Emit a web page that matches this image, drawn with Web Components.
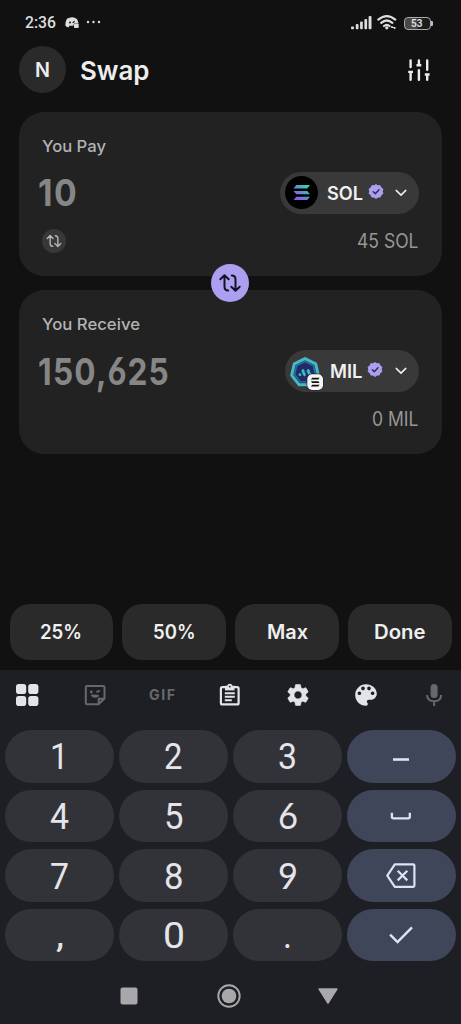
<!DOCTYPE html>
<html lang="en">
<head>
<meta charset="utf-8">
<meta name="viewport" content="width=device-width">
<title>Swap</title>
<style>
html,body{margin:0;height:100%;background:#111;}
</style>
</head>
<body>
<swap-screen></swap-screen>
<script>
const ICONS = {
  discord: ['0 0 14 12', '<path fill="currentColor" d="M4.200 1 5.200.4Q7 0 8.900.4l1 .6q2 .4 2.700 2.200l.9 3.200H9.600q-1 0-1 1v1.300H4.500L3.400 10.600Q1.300 10 .3 8.600.1 4.800 1.800 1.900q.8-.8 2.400-.9Z"/><circle cx="5" cy="5.600" r="1" fill="#111"/><path d="M7.700 5.800 9.600 4.300" stroke="#111" stroke-width="1.200"/><rect x="9" y="6.800" width="4.700" height="4.200" rx=".8" fill="currentColor"/>'],
  dots: ['0 0 16 4', '<g fill="currentColor"><circle cx="2" cy="2" r="1.200"/><circle cx="7.500" cy="2" r="1.200"/><circle cx="13" cy="2" r="1.200"/></g>'],
  signal: ['0 0 21 14', '<g fill="currentColor"><rect x="0" y="10.500" width="3" height="2.800" rx="1"/><rect x="4.800" y="8" width="2.700" height="5.300" rx="1"/><rect x="9.100" y="5.500" width="2.700" height="7.800" rx="1"/><rect x="13.400" y="3" width="2.700" height="10.300" rx="1"/><rect x="17.600" y="0" width="2.900" height="13.300" rx="1"/></g>'],
  wifi: ['0 0 20 15', '<g fill="none" stroke="currentColor" stroke-width="2.200" stroke-linecap="round"><path d="M1.300 4.600Q9.800-2.500 18.300 4.600M4.200 7.900Q9.800 3.100 15.400 7.900M7 11Q9.800 8.600 12.600 11"/></g><circle cx="9.800" cy="12.800" r="1.600" fill="currentColor"/><path d="M14 12.500h4.500m-3-1.200-1.500 1.200m4.500 0-1.500 1.300" stroke="currentColor" stroke-width="1.200"/>'],
  sliders: ['0 0 22 22', '<g fill="none" stroke="currentColor" stroke-width="2.400"><g stroke-linecap="round"><path d="M2.600 1.500v6.600M2.600 14v6.700M10.900 1.500v4M10.900 11.200v9.500M19.200 1.500v9.300M19.200 16v4.700"/></g><path d="M.2 12.900h4.800M8.500 6.300h4.800M16.800 15.500h4.800"/></g>'],
  swap: ['0 0 22 20', '<g fill="none" stroke="currentColor" stroke-width="2" stroke-linecap="round" stroke-linejoin="round"><path d="M1.300 6.300 5.500 2.200 9.700 6.300M5.500 2.500v11q0 4 3.700 4M12.800 2.500q3.700 0 3.700 4v11M12.300 13.700l4.200 4.100 4.200-4.100"/></g>'],
  seal: ['0 0 16 16', '<path fill="#ab9ff2" d="m8 .6 1.900 1.200 2.300-.1.800 2.100 1.900 1.300L14.300 7.300l.6 2.300L13 10.900l-.8 2.100-2.300.1L8 14.500l-1.900-1.400-2.300-.1L3 10.900 1.100 9.600 1.700 7.300 1.100 5.100 3 3.800l.8-2.100 2.300.1Z" stroke="#ab9ff2" stroke-linejoin="round"/><path d="m5.300 7.700 2 2L11 5.800" fill="none" stroke="#33304a" stroke-width="1.500" stroke-linecap="round" stroke-linejoin="round"/>'],
  chevron: ['0 0 12 8', '<path d="m1.200 1.400 4.800 4.700 4.800-4.700" fill="none" stroke="currentColor" stroke-width="1.500" stroke-linecap="round" stroke-linejoin="round"/>'],
  sol: ['0 0 33 33', '<defs><linearGradient id="g" gradientUnits="userSpaceOnUse" x1="9" y1="25" x2="24" y2="9"><stop offset="0" stop-color="#a044f5"/><stop offset=".45" stop-color="#6a82d8"/><stop offset="1" stop-color="#20eaa5"/></linearGradient></defs><circle cx="16.500" cy="16.500" r="16.500" fill="#000"/><path fill="url(#g)" d="M11.300 9.100H25l-2.800 3.300H8.500ZM8.500 14.900h13.700l2.800 3.300H11.300ZM11.300 20.700H25L22.200 24H8.500Z"/>'],
  mil: ['0 0 36 36', '<path d="m16 2.600 10.700 5.200L29.300 19.300 22 28.700H10L2.700 19.300 5.300 7.800Z" fill="#26336d" stroke="#46b9c7" stroke-width="3" stroke-linejoin="round"/><path d="m16 5.600 8.300 4 2 9-5.800 7.300h-9l-5.800-7.300 2-9Z" fill="#232a65" stroke="#1d7997" stroke-width="1.400"/><g stroke="#35bcc5" stroke-width="2.800" stroke-linecap="round"><path d="m14 14.500.1.100M19.300 14.500l.1.100M10.900 18.700l.1 0M13.800 15l1.700 3.700M19 15l2 3.700"/></g><rect x="17.600" y="17.500" width="17" height="17" rx="5.500" fill="#222"/><rect x="18.300" y="18.300" width="15.700" height="15.700" rx="4.800" fill="#f5f5f5"/><path fill="#111" d="M23.200 21.700h7.400l-1.300 1.800h-7.400ZM21.900 25.200h7.400l1.300 1.800h-7.400ZM23.200 28.700h7.400l-1.300 1.800h-7.400Z"/>'],
  grid: ['0 0 24 24', '<g fill="currentColor"><rect x="1" y="1" width="10.200" height="10" rx="2.800"/><rect x="13.200" y="1" width="10.200" height="10" rx="2.800"/><rect x="1" y="13" width="10.200" height="10" rx="2.800"/><rect x="13.200" y="13" width="10.200" height="10" rx="2.800"/></g>'],
  sticker: ['0 0 24 24', '<g fill="none" stroke="currentColor" stroke-width="2" stroke-linejoin="round"><path d="M4 3h16.300q1.200 0 1.200 1.200V15.500L15.500 21.300H4q-1.200 0-1.200-1.200V4.200Q2.800 3 4 3ZM21 15.800h-5.300v5.200"/><path d="M9 12.500q3.200 2.400 6 .3Z" fill="currentColor"/><path d="M13.500 9.200 16.800 7.700" /></g><circle cx="8.300" cy="9" r="1.400" fill="currentColor"/>'],
  clipboard: ['0 0 24 24', '<rect x="2.900" y="4.200" width="17.700" height="17.200" rx="1.500" fill="none" stroke="currentColor" stroke-width="2.200"/><rect x="7" y="2.700" width="9.500" height="4.700" fill="currentColor"/><circle cx="11.800" cy="3.300" r="2.500" fill="currentColor"/><circle cx="11.800" cy="3.600" r=".9" fill="#1e1f24"/><path d="M6.800 10.200h10M6.800 13.700h10M6.800 17.200h7" stroke="currentColor" stroke-width="1.900"/>'],
  gear: ['1 1 22 22', '<path fill="currentColor" d="M19.140 12.940c.04-.3.060-.61.060-.94 0-.32-.02-.64-.07-.94l2.030-1.580c.18-.14.230-.41.120-.61l-1.920-3.320c-.12-.22-.37-.29-.59-.22l-2.390.96c-.5-.38-1.030-.7-1.620-.94l-.36-2.540c-.04-.24-.24-.41-.48-.41h-3.840c-.24 0-.43.170-.47.410l-.36 2.540c-.59.240-1.130.570-1.620.940l-2.390-.96c-.22-.08-.47 0-.59.220L2.740 8.870c-.12.210-.08.470.12.610l2.030 1.580c-.05.300-.09.630-.09.940s.02.640.070.940l-2.030 1.580c-.18.140-.23.410-.12.610l1.920 3.320c.12.220.370.290.590.220l2.390-.96c.5.380 1.030.700 1.620.940l.36 2.540c.05.240.240.410.480.410h3.840c.24 0 .44-.17.470-.41l.36-2.540c.59-.24 1.130-.56 1.620-.94l2.390.96c.22.080.470 0 .59-.22l1.920-3.320c.12-.22.070-.47-.12-.61ZM12 15.600c-1.980 0-3.600-1.620-3.600-3.600s1.620-3.600 3.600-3.600 3.600 1.620 3.600 3.600-1.620 3.600-3.600 3.600Z" stroke="currentColor" stroke-width=".5"/>'],
  palette: ['2 2 20 20', '<path fill="currentColor" d="M12 3c-4.970 0-9 4.030-9 9s4.030 9 9 9c.83 0 1.500-.67 1.500-1.500 0-.39-.15-.74-.39-1.010-.23-.26-.38-.61-.38-.99 0-.83.670-1.500 1.500-1.500H16c2.760 0 5-2.240 5-5 0-4.420-4.030-8-9-8Zm-5.500 9c-.83 0-1.500-.67-1.500-1.500S5.670 9 6.500 9 8 9.670 8 10.500 7.330 12 6.500 12Zm3-4C8.670 8 8 7.330 8 6.500S8.670 5 9.500 5s1.500.67 1.500 1.500S10.330 8 9.500 8Zm5 0c-.83 0-1.500-.67-1.500-1.500S13.670 5 14.500 5s1.500.67 1.500 1.500S15.330 8 14.500 8Zm3 4c-.83 0-1.500-.67-1.500-1.500S16.670 9 17.500 9s1.500.67 1.500 1.500-.67 1.500-1.500 1.500Z"/>'],
  mic: ['0 0 24 24', '<rect x="8.600" y=".9" width="7" height="14.200" rx="3.500" fill="currentColor"/><path d="M5.100 12q0 6.300 7 6.300T19.100 12M12.100 18.300V23" fill="none" stroke="currentColor" stroke-width="2"/>'],
  minus: ['0 0 32 28', '<path d="M8 17.500h16" stroke="currentColor" stroke-width="2.600"/>'],
  space: ['0 0 32 28', '<path d="M6.900 10.800v4q0 1.500 1.500 1.500h14.900q1.500 0 1.500-1.500v-4" fill="none" stroke="currentColor" stroke-width="2.300"/>'],
  erase: ['0 0 32 28', '<g fill="none" stroke="currentColor" stroke-width="2.200" stroke-linejoin="round"><path d="M9.800 2.400h18.400q1.200 0 1.200 1.200v20q0 1.200-1.200 1.200H9.800L2.300 13.600ZM12.700 8.800l9.600 9.600M22.300 8.800l-9.600 9.600"/></g>'],
  check: ['0 0 32 28', '<path d="m5.100 13.700 7.400 7.300L27 6.300" fill="none" stroke="currentColor" stroke-width="2.400"/>'],
  square: ['0 0 24 24', '<rect x="3.500" y="3.500" width="17" height="17" rx="2" fill="currentColor"/>'],
  home: ['0 0 24 24', '<circle cx="12" cy="12" r="10.700" fill="none" stroke="currentColor" stroke-width="1.900"/><circle cx="12" cy="12" r="7.300" fill="currentColor"/>'],
  back: ['0 0 24 24', '<path d="M3.200 5h17.600L12 19Z" fill="currentColor" stroke="currentColor" stroke-width="1.600" stroke-linejoin="round"/>']
};

class UiIcon extends HTMLElement {
  connectedCallback() {
    const [box, body] = ICONS[this.getAttribute('name')];
    this.attachShadow({mode: 'open'}).innerHTML = `
      <style>:host{display:block;flex:none;width:24px;height:24px}svg{display:block;width:100%;height:100%;overflow:visible}</style>
      <svg viewBox="${box}" aria-hidden="true">${body}</svg>`;
  }
}
customElements.define('ui-icon', UiIcon);

/* One line of text, condensed or widened to a set width. */
class UiText extends HTMLElement {
  connectedCallback() {
    this.attachShadow({mode: 'open'}).innerHTML = `
      <style>:host{display:block;flex:none;white-space:nowrap}span{display:inline-block;transform-origin:0 50%}</style>
      <span><slot></slot></span>`;
    const w = parseFloat(this.getAttribute('w'));
    const span = this.shadowRoot.querySelector('span');
    const natural = span.getBoundingClientRect().width;
    this.style.width = w + 'px';
    if (natural) span.style.transform = `scaleX(${w / natural})`;
  }
}
customElements.define('ui-text', UiText);

class StatusBar extends HTMLElement {
  connectedCallback() {
    this.attachShadow({mode: 'open'}).innerHTML = `
      <style>
        :host{display:flex;align-items:center;height:46px;padding:0 28px 0 25px;box-sizing:border-box;color:#dedede;font:500 16px/20px Roboto,sans-serif}
        .spacer{flex:1}
        .battery{box-sizing:border-box;width:27px;height:13px;border:1.500px solid #aaa;border-radius:4px;background:linear-gradient(90deg,#484848 45%,#1c1c1c 55%);display:flex;align-items:center;justify-content:center;margin-left:7px}
        .battery ui-text{font:700 10.500px/11px Roboto,sans-serif}
        .nub{width:2px;height:5px;margin-left:.5px;background:#bbb;border-radius:0 1px 1px 0}
      </style>
      <ui-text w="31">2:36</ui-text>
      <ui-icon name="discord" style="width:14px;height:12px;margin-left:9px"></ui-icon>
      <ui-icon name="dots" style="width:16px;height:4px;margin-left:7px;margin-top:-2px"></ui-icon>
      <div class="spacer"></div>
      <ui-icon name="signal" style="width:21px;height:14px"></ui-icon>
      <ui-icon name="wifi" style="width:20px;height:15px;margin-left:5px;margin-top:-1px"></ui-icon>
      <div class="battery"><ui-text w="11.500">53</ui-text></div><div class="nub"></div>`;
  }
}
customElements.define('status-bar', StatusBar);

class SwapHeader extends HTMLElement {
  connectedCallback() {
    this.attachShadow({mode: 'open'}).innerHTML = `
      <style>
        :host{display:flex;align-items:center;height:47px;padding:0 31px 0 19px;color:#ededed;font-family:Inter,sans-serif}
        .avatar{width:47px;height:47px;border-radius:50%;background:#2a2a2a;display:flex;align-items:center;justify-content:center;font:600 20px/24px Inter,sans-serif}
        .title{font:600 26px/32px Inter,sans-serif;margin:2px 0 0 13.500px;flex:1 0 auto}
      </style>
      <div class="avatar"><ui-text w="15">N</ui-text></div>
      <div class="title"><ui-text w="69.500">Swap</ui-text></div>
      <ui-icon name="sliders" style="width:22px;height:22px"></ui-icon>`;
  }
}
customElements.define('swap-header', SwapHeader);

class TokenChip extends HTMLElement {
  connectedCallback() {
    const mil = this.getAttribute('token') === 'MIL';
    this.attachShadow({mode: 'open'}).innerHTML = `
      <style>
        :host{display:flex;align-items:center;box-sizing:border-box;height:42px;width:${mil ? 134.5 : 139}px;padding:0 12px 0 5px;border-radius:21px;background:#393939;color:#f0f0f0;font:600 18.500px/22px Inter,sans-serif}
        ui-text{margin-left:${mil ? 5 : 9}px}
        .seal{width:16px;height:16px;margin:-2px 0 0 4.500px}
        .chev{width:12px;height:8px;margin-left:auto}
      </style>
      ${mil ? '<ui-icon name="mil" style="width:36px;height:36px;margin:3px 0 -3px -.5px"></ui-icon>' : '<ui-icon name="sol" style="width:33px;height:33px"></ui-icon>'}
      <ui-text w="${mil ? 32.5 : 36}">${this.getAttribute('token')}</ui-text>
      <ui-icon class="seal" name="seal"></ui-icon>
      <ui-icon class="chev" name="chevron"></ui-icon>`;
  }
}
customElements.define('token-chip', TokenChip);

class AmountCard extends HTMLElement {
  connectedCallback() {
    const a = n => this.getAttribute(n);
    this.attachShadow({mode: 'open'}).innerHTML = `
      <style>
        :host{display:flex;flex-direction:column;box-sizing:border-box;height:164.300px;padding:24.300px 23px 0 19px;border-radius:25px;background:#222}
        .label{height:20px;margin-left:4px;color:#b3b3b3;font:500 16.500px/21px Inter,sans-serif}
        .row{display:flex;align-items:center;justify-content:space-between}
        .main{height:42px;margin-top:16px}
        .foot{height:24px;margin:15px 1px 0 4px}
        .amount{margin-left:-.5px;color:#868686;font:700 37.500px/42px Inter,sans-serif;letter-spacing:1.500px}
        .balance{margin-left:auto;color:#969696;font:400 19.500px/24px Inter,sans-serif}
        .flip{width:24px;height:24px;border-radius:50%;background:#383838;color:#b5b5b5;display:flex;align-items:center;justify-content:center}
        .alt{font-family:Lato,sans-serif;font-weight:900}
      </style>
      <div class="label"><ui-text w="${a('label-width')}">${a('label')}</ui-text></div>
      <div class="row main"><ui-text class="amount" w="${a('amount-width')}">${a('amount').replace('6', '<span class="alt">6</span>')}</ui-text><token-chip token="${a('token')}"></token-chip></div>
      <div class="row foot">${this.hasAttribute('flip') ? '<div class="flip"><ui-icon name="swap" style="width:16px;height:14px"></ui-icon></div>' : ''}<ui-text class="balance" w="${a('balance-width')}">${a('balance')}</ui-text></div>`;
  }
}
customElements.define('amount-card', AmountCard);

class SwapPair extends HTMLElement {
  connectedCallback() {
    this.attachShadow({mode: 'open'}).innerHTML = `
      <style>
        :host{position:relative;display:flex;flex-direction:column;gap:14px;margin:18.500px 19px 0}
        button{position:absolute;left:calc(50% - .5px);top:50%;width:38px;height:38px;transform:translate(-50%,-50%);border:0;padding:0;border-radius:50%;background:#ab9ff2;color:#15131f;display:flex;align-items:center;justify-content:center}
      </style>
      <slot></slot>
      <button aria-label="Switch tokens"><ui-icon name="swap" style="width:22px;height:20px"></ui-icon></button>`;
  }
}
customElements.define('swap-pair', SwapPair);

class QuickActions extends HTMLElement {
  connectedCallback() {
    const items = [['25%', 42], ['50%', 42.500], ['Max', 41], ['Done', 51.500]];
    this.attachShadow({mode: 'open'}).innerHTML = `
      <style>
        :host{display:grid;grid-template-columns:repeat(4,1fr);gap:9.300px;padding:0 9px 9.500px 9.500px}
        div{height:56.500px;border-radius:20px;background:#2a2a2a;color:#f0f0f0;display:flex;align-items:center;justify-content:center;font:600 19.500px/24px Inter,sans-serif}
      </style>
      ${items.map(([t, w]) => `<div><ui-text w="${w}">${t}</ui-text></div>`).join('')}`;
  }
}
customElements.define('quick-actions', QuickActions);

class KeyCap extends HTMLElement {
  connectedCallback() {
    const v = this.getAttribute('value'), icon = this.getAttribute('icon');
    const lato = '69'.includes(v || 'x');
    this.attachShadow({mode: 'open'}).innerHTML = `
      <style>
        :host{display:flex;align-items:center;justify-content:center;border-radius:27px;background:${icon ? '#404659' : '#323338'};color:${icon ? '#dde1f9' : '#e4e4e9'};font:400 36px/42px ${lato ? 'Lato' : 'Roboto'},sans-serif}
        ui-text{margin-top:${lato ? -2 : v === ',' ? -1 : 2}px}
        ui-icon{width:32px;height:28px;margin-right:1px}
      </style>
      ${icon ? `<ui-icon name="${icon}"></ui-icon>` : `<ui-text w="${this.getAttribute('w')}">${v}</ui-text>`}`;
  }
}
customElements.define('key-cap', KeyCap);

class NumberKeyboard extends HTMLElement {
  connectedCallback() {
    const keys = [['1', 18.500], ['2', 18.500], ['3', 19], 'minus', ['4', 19], ['5', 19.500], ['6', 20], 'space', ['7', 19], ['8', 19.500], ['9', 20], 'erase', [',', 8], ['0', 22], ['.', 9], 'check'];
    this.attachShadow({mode: 'open'}).innerHTML = `
      <style>
        :host{display:block;height:354.500px;background:#1e1f24}
        .tools{display:flex;justify-content:space-between;align-items:center;height:50px;padding:0 15.500px 0 15px;color:#e3e3ea}
        .tools .dim{color:#67686d}
        .gif{width:24px;display:flex;justify-content:center;color:#67686d;font:700 14.500px/20px Inter,sans-serif;letter-spacing:1.500px}
        .keys{display:grid;grid-template-columns:repeat(4,1fr);grid-template-rows:repeat(4,52.700px);gap:6.900px 5px;margin-top:10.500px;padding:0 5px}
        .nav{display:flex;justify-content:center;gap:75.500px;margin-top:22.500px;padding-right:3.500px;color:#a8a8ab}
      </style>
      <div class="tools">
        <ui-icon name="grid"></ui-icon><ui-icon class="dim" name="sticker"></ui-icon>
        <div class="gif"><ui-text w="27.500">GIF</ui-text></div>
        <ui-icon name="clipboard"></ui-icon><ui-icon name="gear"></ui-icon><ui-icon name="palette"></ui-icon><ui-icon class="dim" name="mic"></ui-icon>
      </div>
      <div class="keys">${keys.map(k => Array.isArray(k) ? `<key-cap value="${k[0]}" w="${k[1]}"></key-cap>` : `<key-cap icon="${k}"></key-cap>`).join('')}</div>
      <div class="nav"><ui-icon name="square"></ui-icon><ui-icon name="home"></ui-icon><ui-icon name="back"></ui-icon></div>`;
  }
}
customElements.define('number-keyboard', NumberKeyboard);

class SwapScreen extends HTMLElement {
  connectedCallback() {
    this.attachShadow({mode: 'open'}).innerHTML = `
      <style>
        :host{display:flex;flex-direction:column;width:461px;height:1024px;overflow:hidden;background:#111}
        .space{flex:1}
      </style>
      <status-bar></status-bar>
      <swap-header></swap-header>
      <swap-pair>
        <amount-card label="You Pay" label-width="64" amount="10" amount-width="40" token="SOL" balance="45 SOL" balance-width="61.500" flip></amount-card>
        <amount-card label="You Receive" label-width="98" amount="150,625" amount-width="132" token="MIL" balance="0 MIL" balance-width="46.500"></amount-card>
      </swap-pair>
      <div class="space"></div>
      <quick-actions></quick-actions>
      <number-keyboard></number-keyboard>`;
  }
}
customElements.define('swap-screen', SwapScreen);
</script>
</body>
</html>
